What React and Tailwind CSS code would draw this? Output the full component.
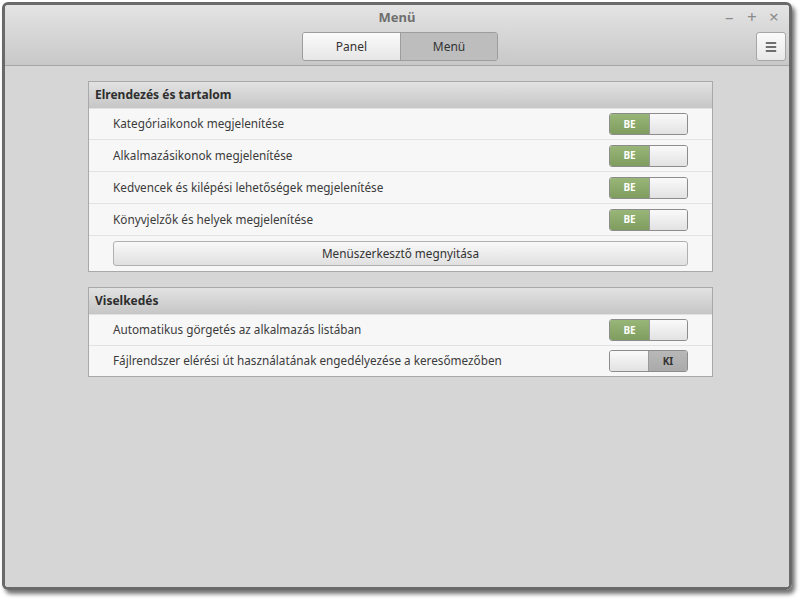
import { Menu as MenuIcon } from 'lucide-react'

const font = { fontFamily: '"Noto Sans", "DejaVu Sans", sans-serif' }

function Switch({ on }) {
  return (
    <div className="flex h-[22px] w-[79px] overflow-hidden rounded-[3px] border border-[#8c8c8c] text-[10px] font-bold">
      {on ? (
        <>
          <div className="flex w-[39px] items-center justify-center bg-gradient-to-b from-[#97b678] to-[#7e9d5e] text-white">BE</div>
          <div className="flex-1 border-l border-[#9a9a9a] bg-gradient-to-b from-[#fafafa] to-[#e2e2e2]" />
        </>
      ) : (
        <>
          <div className="w-[39px] border-r border-[#9a9a9a] bg-gradient-to-b from-[#fafafa] to-[#e2e2e2]" />
          <div className="flex flex-1 items-center justify-center bg-gradient-to-b from-[#b8b8b8] to-[#aaaaaa] text-[#333]">KI</div>
        </>
      )}
    </div>
  )
}

function Row({ label, on, tall }) {
  return (
    <div className={`flex ${tall ? 'h-[32px]' : 'h-[31px]'} items-center justify-between border-t border-[#e2e2e2] px-[24px]`}>
      <span className="text-[11.75px] text-[#3b3b3b]">{label}</span>
      <Switch on={on} />
    </div>
  )
}

function Section({ title, children }) {
  return (
    <div className="border border-[#a9a9a9] bg-[#f7f7f7]">
      <div className="flex h-[27px] items-center border-b border-[#a9a9a9] bg-gradient-to-b from-[#e2e2e2] to-[#c6c6c6] px-[6px] text-[12px] font-bold text-[#2e2e2e]">
        {title}
      </div>
      <div className="-mt-px">{children}</div>
    </div>
  )
}

export default function App() {
  return (
    <div className="h-[600px] w-[800px] bg-white pl-[2px] pt-[2px]" style={font}>
      <div className="flex h-[588px] w-[790px] flex-col overflow-hidden rounded-[6px] border-[3px] border-[#6a6a6a] shadow-[3px_4px_4px_rgba(0,0,0,0.55)]">
        {/* title bar + header bar */}
        <div className="relative h-[61px] shrink-0 border-b border-[#a6a6a6] bg-gradient-to-b from-[#e4e4e4] to-[#c8c8c8]">
          <div className="pt-[3px] text-center text-[13px] font-bold leading-[18px] text-[#6f6f6f]">Menü</div>
          <div className="absolute right-[12px] top-[2px] flex items-center gap-[14px] text-[17px] leading-[20px] text-[#8c8c8c]">
            <span className="w-[8px] text-center">–</span>
            <span className="w-[8px] text-center">+</span>
            <span className="w-[8px] text-center">×</span>
          </div>
          <div className="mt-[6px] flex justify-center pl-[6px]">
            <div className="flex h-[29px] overflow-hidden rounded-[3px] border border-[#9d9d9d] text-[12px] text-[#333]">
              <div className="flex w-[97px] items-center justify-center bg-gradient-to-b from-[#fbfbfb] to-[#e6e6e6]">Panel</div>
              <div className="flex w-[97px] items-center justify-center border-l border-[#9d9d9d] bg-[#bdbdbd]">Menü</div>
            </div>
          </div>
          <div className="absolute right-[3px] top-[27px] flex h-[29px] w-[30px] items-center justify-center rounded-[3px] border border-[#a6a6a6] bg-gradient-to-b from-[#fbfbfb] to-[#e8e8e8]">
            <MenuIcon size={14} strokeWidth={2.5} className="text-[#444]" />
          </div>
        </div>

        {/* content */}
        <div className="flex flex-1 flex-col gap-[15px] bg-[#d6d6d6] pl-[83px] pr-[76px] pt-[15px]">
          <Section title="Elrendezés és tartalom">
            <Row label="Kategóriaikonok megjelenítése" on />
            <Row label="Alkalmazásikonok megjelenítése" on tall />
            <Row label="Kedvencek és kilépési lehetőségek megjelenítése" on tall />
            <Row label="Könyvjelzők és helyek megjelenítése" on tall />
            <div className="border-t border-[#e2e2e2] px-[24px] pb-[5px] pt-[5px]">
              <div className="flex h-[25px] items-center justify-center rounded-[3px] border border-[#b0b0b0] bg-gradient-to-b from-[#f9f9f9] to-[#e0e0e0] text-[11.75px] text-[#333]">
                Menüszerkesztő megnyitása
              </div>
            </div>
          </Section>
          <Section title="Viselkedés">
            <Row label="Automatikus görgetés az alkalmazás listában" on />
            <Row label="Fájlrendszer elérési út használatának engedélyezése a keresőmezőben" on={false} />
          </Section>
        </div>
      </div>
    </div>
  )
}
